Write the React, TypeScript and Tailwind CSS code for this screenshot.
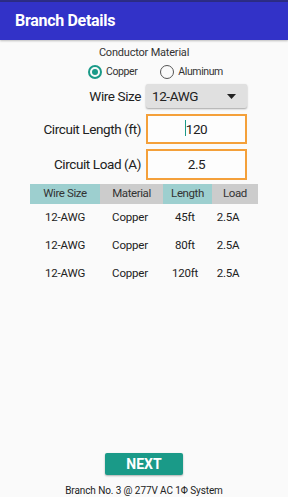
import React from "react";

const rows = [
  ["12-AWG", "Copper", "45ft", "2.5A"],
  ["12-AWG", "Copper", "80ft", "2.5A"],
  ["12-AWG", "Copper", "120ft", "2.5A"],
];

export default function App() {
  return (
    <div
      className="flex flex-col h-[497px] w-[288px] bg-[#fafafa] text-[#212121] overflow-hidden"
      style={{ fontFamily: "Roboto, 'Noto Sans', sans-serif" }}
    >
      <div className="h-[2px] bg-[#2c2c86]" />
      <div className="h-[38px] bg-[#3232c8] flex items-center pl-[15px] shadow-[0_1px_2px_rgba(0,0,0,0.25)]">
        <span className="text-white font-bold text-[16px] tracking-[-0.3px] leading-none">Branch Details</span>
      </div>

      <div className="mt-[6px] text-center text-[11px] tracking-[-0.2px] leading-[14px] text-[#333]">Conductor Material</div>

      <div className="mt-[4px] flex items-center h-[16px]">
        <div className="ml-[88px] flex items-center">
          <span className="w-[14px] h-[14px] rounded-full border-2 border-[#1a9a88] flex items-center justify-center">
            <span className="w-[6px] h-[6px] rounded-full bg-[#1a9a88]" />
          </span>
          <span className="ml-[4px] text-[10.5px] tracking-[-0.4px] text-[#333]">Copper</span>
        </div>
        <div className="ml-[23px] flex items-center">
          <span className="w-[14px] h-[14px] rounded-full border-[1.5px] border-[#555]" />
          <span className="ml-[4px] text-[10.5px] tracking-[-0.4px] text-[#333]">Aluminum</span>
        </div>
      </div>

      <div className="mt-[4px] flex items-center">
        <div className="w-[141px] text-right text-[13.5px] tracking-[-0.4px]">Wire Size</div>
        <div className="ml-[5px] w-[101px] h-[24px] bg-[#e0e0e0] rounded-[2px] shadow-[0_1px_2px_rgba(0,0,0,0.35)] flex items-center pl-[6px] pr-[11px] justify-between">
          <span className="text-[13.5px] tracking-[-0.4px] text-[#222]">12-AWG</span>
          <svg width="9" height="5" viewBox="0 0 9 5">
            <path d="M0 0 L9 0 L4.5 5 Z" fill="#222" />
          </svg>
        </div>
      </div>

      <div className="mt-[6px] flex items-center">
        <div className="w-[141px] text-right text-[13.5px] tracking-[-0.4px]">Circuit Length (ft)</div>
        <div className="ml-[5px] w-[101px] h-[30px] border-2 border-[#f4a03a] bg-[#fdfdfd] flex items-center justify-center">
          <span className="relative text-[13.5px] tracking-[-0.4px]">
            <span className="absolute left-[-1px] top-[1px] w-[1.5px] h-[16px] bg-[#1a9a88]" />
            120
          </span>
        </div>
      </div>

      <div className="mt-[5px] flex items-center">
        <div className="w-[141px] text-right text-[13.5px] tracking-[-0.4px]">Circuit Load (A)</div>
        <div className="ml-[5px] w-[101px] h-[31px] border-2 border-[#f4a03a] bg-[#fdfdfd] flex items-center justify-center">
          <span className="text-[13.5px] tracking-[-0.4px]">2.5</span>
        </div>
      </div>

      <div className="mt-[4px] ml-[30px] w-[228px] grid grid-cols-[70px_63px_49px_46px] h-[20px] text-[11.5px] tracking-[-0.4px] text-[#333]">
        <div className="bg-[#9dcfcf] flex items-center justify-center">Wire Size</div>
        <div className="bg-[#cccccc] flex items-center justify-center">Material</div>
        <div className="bg-[#9dcfcf] flex items-center justify-center">Length</div>
        <div className="bg-[#cccccc] flex items-center justify-center">Load</div>
      </div>

      <div className="ml-[30px] w-[228px]">
        {rows.map((r, i) => (
          <div key={i} className="grid grid-cols-[70px_63px_49px_46px] h-[28px] items-center text-[11.5px] tracking-[-0.2px] text-[#222]">
            <div className="text-center">{r[0]}</div>
            <div className="text-center pr-[3px]">{r[1]}</div>
            <div className="text-center pr-[5px]">{r[2]}</div>
            <div className="text-center pr-[14px]">{r[3]}</div>
          </div>
        ))}
      </div>

      <div className="mt-auto flex justify-center">
        <div className="w-[78px] h-[22px] bg-[#1a9a88] rounded-[2px] shadow-[0_1px_2px_rgba(0,0,0,0.3)] flex items-center justify-center text-white font-bold text-[14px]">
          NEXT
        </div>
      </div>
      <div className="mt-[10px] mb-0 text-center text-[10px] tracking-[-0.1px] leading-[12px] text-[#222]">
        Branch No. 3 @ 277V AC 1Φ System
      </div>
    </div>
  );
}
